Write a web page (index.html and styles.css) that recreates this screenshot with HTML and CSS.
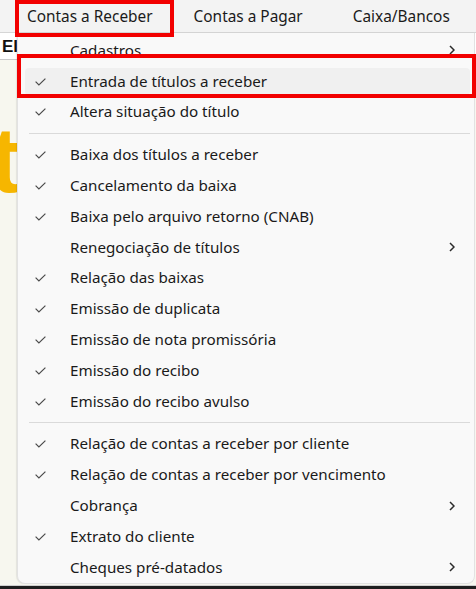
FILE: index.html
```html
<!DOCTYPE html>
<html lang="pt-BR">
<head>
<meta charset="utf-8">
<title>Contas a Receber</title>
<link rel="stylesheet" href="styles.css">
</head>
<body>
<div class="screen">
  <nav class="menubar">
    <span class="top-item first">Contas a Receber</span>
    <span class="top-item second">Contas a Pagar</span>
    <span class="top-item third">Caixa/Bancos</span>
  </nav>
  <div class="app">
    <div class="app-row">El</div>
    <div class="app-body"><span class="logo-t">t</span></div>
  </div>
  <div class="taskbar"></div>

  <div class="dropdown">
    <div class="item"><span class="check"></span><span class="label">Cadastros</span><span class="arrow"><svg width="6" height="10" viewBox="0 0 6 10"><polyline points="1,1 5,5 1,9" fill="none" stroke="#2b2b2b" stroke-width="1.5"/></svg></span></div>
    <div class="item hover"><span class="check"><svg width="11" height="8" viewBox="0 0 11 8"><polyline points="0.6,3.6 3.9,6.9 10.4,0.6" fill="none" stroke="#4a4a4a" stroke-width="1.2"/></svg></span><span class="label">Entrada de títulos a receber</span></div>
    <div class="item"><span class="check"><svg width="11" height="8" viewBox="0 0 11 8"><polyline points="0.6,3.6 3.9,6.9 10.4,0.6" fill="none" stroke="#4a4a4a" stroke-width="1.2"/></svg></span><span class="label">Altera situação do título</span></div>
    <div class="sep"></div>
    <div class="item"><span class="check"><svg width="11" height="8" viewBox="0 0 11 8"><polyline points="0.6,3.6 3.9,6.9 10.4,0.6" fill="none" stroke="#4a4a4a" stroke-width="1.2"/></svg></span><span class="label">Baixa dos títulos a receber</span></div>
    <div class="item"><span class="check"><svg width="11" height="8" viewBox="0 0 11 8"><polyline points="0.6,3.6 3.9,6.9 10.4,0.6" fill="none" stroke="#4a4a4a" stroke-width="1.2"/></svg></span><span class="label">Cancelamento da baixa</span></div>
    <div class="item"><span class="check"><svg width="11" height="8" viewBox="0 0 11 8"><polyline points="0.6,3.6 3.9,6.9 10.4,0.6" fill="none" stroke="#4a4a4a" stroke-width="1.2"/></svg></span><span class="label">Baixa pelo arquivo retorno (CNAB)</span></div>
    <div class="item"><span class="check"></span><span class="label">Renegociação de títulos</span><span class="arrow"><svg width="6" height="10" viewBox="0 0 6 10"><polyline points="1,1 5,5 1,9" fill="none" stroke="#2b2b2b" stroke-width="1.5"/></svg></span></div>
    <div class="item"><span class="check"><svg width="11" height="8" viewBox="0 0 11 8"><polyline points="0.6,3.6 3.9,6.9 10.4,0.6" fill="none" stroke="#4a4a4a" stroke-width="1.2"/></svg></span><span class="label">Relação das baixas</span></div>
    <div class="item"><span class="check"><svg width="11" height="8" viewBox="0 0 11 8"><polyline points="0.6,3.6 3.9,6.9 10.4,0.6" fill="none" stroke="#4a4a4a" stroke-width="1.2"/></svg></span><span class="label">Emissão de duplicata</span></div>
    <div class="item"><span class="check"><svg width="11" height="8" viewBox="0 0 11 8"><polyline points="0.6,3.6 3.9,6.9 10.4,0.6" fill="none" stroke="#4a4a4a" stroke-width="1.2"/></svg></span><span class="label">Emissão de nota promissória</span></div>
    <div class="item"><span class="check"><svg width="11" height="8" viewBox="0 0 11 8"><polyline points="0.6,3.6 3.9,6.9 10.4,0.6" fill="none" stroke="#4a4a4a" stroke-width="1.2"/></svg></span><span class="label">Emissão do recibo</span></div>
    <div class="item"><span class="check"><svg width="11" height="8" viewBox="0 0 11 8"><polyline points="0.6,3.6 3.9,6.9 10.4,0.6" fill="none" stroke="#4a4a4a" stroke-width="1.2"/></svg></span><span class="label">Emissão do recibo avulso</span></div>
    <div class="sep"></div>
    <div class="item"><span class="check"><svg width="11" height="8" viewBox="0 0 11 8"><polyline points="0.6,3.6 3.9,6.9 10.4,0.6" fill="none" stroke="#4a4a4a" stroke-width="1.2"/></svg></span><span class="label">Relação de contas a receber por cliente</span></div>
    <div class="item"><span class="check"><svg width="11" height="8" viewBox="0 0 11 8"><polyline points="0.6,3.6 3.9,6.9 10.4,0.6" fill="none" stroke="#4a4a4a" stroke-width="1.2"/></svg></span><span class="label">Relação de contas a receber por vencimento</span></div>
    <div class="item"><span class="check"></span><span class="label">Cobrança</span><span class="arrow"><svg width="6" height="10" viewBox="0 0 6 10"><polyline points="1,1 5,5 1,9" fill="none" stroke="#2b2b2b" stroke-width="1.5"/></svg></span></div>
    <div class="item"><span class="check"><svg width="11" height="8" viewBox="0 0 11 8"><polyline points="0.6,3.6 3.9,6.9 10.4,0.6" fill="none" stroke="#4a4a4a" stroke-width="1.2"/></svg></span><span class="label">Extrato do cliente</span></div>
    <div class="item"><span class="check"></span><span class="label">Cheques pré-datados</span><span class="arrow"><svg width="6" height="10" viewBox="0 0 6 10"><polyline points="1,1 5,5 1,9" fill="none" stroke="#2b2b2b" stroke-width="1.5"/></svg></span></div>
  </div>

  <div class="mark mark-top"></div>
  <div class="mark mark-item"></div>
</div>
</body>
</html>
```

FILE: styles.css
```css
* { box-sizing: border-box; }
html, body { margin: 0; padding: 0; }
body {
  width: 476px;
  height: 589px;
  overflow: hidden;
  font-family: "Noto Sans", "Open Sans", sans-serif;
  color: #1a1a1a;
  background: #f6f6ef;
}
.screen {
  position: relative;
  width: 476px;
  height: 589px;
  display: flex;
  flex-direction: column;
}
.menubar {
  height: 33px;
  flex: none;
  background: #f3f3f3;
  border-bottom: 1px solid #d6d6d6;
  display: flex;
  align-items: center;
  padding: 1px 0 0 27px;
  font-size: 15.4px;
  white-space: nowrap;
}
.top-item { line-height: 20px; }
.second { margin-left: 41px; }
.third { margin-left: 50px; }

.app {
  flex: 1;
  display: flex;
  flex-direction: column;
}
.app-row {
  height: 27px;
  background: #ffffff;
  border-bottom: 1px solid #c9c9c9;
  font-family: "Liberation Sans", sans-serif;
  font-weight: bold;
  font-size: 17px;
  color: #111;
  padding: 4px 0 0 2px;
  line-height: 20px;
}
.app-body {
  flex: 1;
  background: #f7f7ef;
  overflow: hidden;
  padding: 60px 0 0 0;
}
.logo-t {
  display: block;
  font-family: "Liberation Sans", sans-serif;
  font-weight: bold;
  font-size: 92px;
  line-height: 80px;
  color: #f6b600;
  margin-left: -10px;
}
.taskbar {
  flex: none;
  height: 4px;
  background: #1e1e1e;
  border-top: 1px solid #cfcfcf;
}

.dropdown {
  position: absolute;
  left: 17px;
  top: 33px;
  width: 458px;
  height: 551px;
  background: #f9f9f9;
  border: 1px solid #e2e2e2;
  border-top: none;
  border-radius: 0 0 8px 8px;
  box-shadow: -1px 0 1px rgba(0,0,0,0.08);
  padding: 2px 4px 0 7px;
  font-size: 15.2px;
  display: flex;
  flex-direction: column;
}
.item {
  flex: none;
  height: 26.8px;
  margin: 2px 0;
  border-radius: 4px;
  display: flex;
  align-items: center;
  white-space: nowrap;
}
.item.hover { background: #f0f0f0; }
.check {
  width: 45px;
  flex: none;
  display: flex;
  align-items: center;
  padding-left: 10px;
  padding-top: 1px;
}
.label { flex: 1; line-height: 20px; padding-bottom: 1px; }
.arrow {
  flex: none;
  width: 22px;
  display: flex;
  align-items: center;
  padding-right: 15px;
  justify-content: flex-end;
}
.arrow svg { flex: none; }
.sep {
  flex: none;
  height: 12px;
  margin-left: 4px;
  display: flex;
  align-items: center;
}
.sep::before {
  content: "";
  display: block;
  width: 100%;
  height: 1px;
  background: #dadada;
}

.mark {
  position: absolute;
  border: 4px solid #f20000;
}
.mark-top { left: 15px; top: 0; width: 159px; height: 37px; }
.mark-item { left: 17px; top: 54px; width: 459px; height: 44px; }
```
